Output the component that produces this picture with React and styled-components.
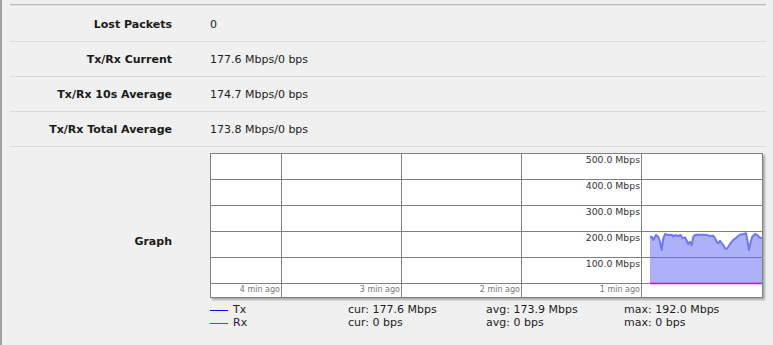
import React from "react";
import styled, { createGlobalStyle } from "styled-components";

const stats = [
  { label: "Lost Packets", value: "0" },
  { label: "Tx/Rx Current", value: "177.6 Mbps/0 bps" },
  { label: "Tx/Rx 10s Average", value: "174.7 Mbps/0 bps" },
  { label: "Tx/Rx Total Average", value: "173.8 Mbps/0 bps" },
];

const scale = ["500.0 Mbps", "400.0 Mbps", "300.0 Mbps", "200.0 Mbps", "100.0 Mbps"];
const cols = [70, 190, 310, 430];
const ago = ["4 min ago", "3 min ago", "2 min ago", "1 min ago"];

// tx samples, already in chart coords
const tx = [
  [439, 83.3], [440.7, 82.7], [442.3, 86], [445, 81], [447.3, 82.7], [449, 87.7],
  [450.7, 96], [452.3, 84.3], [454, 80], [457.3, 81], [460.7, 80.7], [462.3, 82.7],
  [464, 81], [467.3, 82], [469.7, 81], [471.7, 84.3], [474, 83.3], [475.7, 86.7],
  [477.3, 90], [479, 87.7], [480.7, 91], [482.3, 82.7], [484, 81], [487.3, 80.7],
  [492.3, 80.7], [495.7, 81], [499, 82], [502.3, 81.7], [504, 84.3], [505.7, 87.7],
  [507.3, 89.3], [509, 86.7], [510.7, 89.3], [512.3, 91], [514, 94.3], [515.7, 95],
  [517.3, 92.7], [519, 90], [522.3, 86], [525.7, 83.3], [529, 80.7], [532.3, 80],
  [535, 79.3], [536.3, 86], [538, 96], [539.7, 87.7], [541.3, 82.7], [544, 80],
  [546.3, 81], [548.3, 83.3], [551, 84.3],
];

const legend = [
  { name: "Tx", color: "#0000ff", cur: "177.6 Mbps", avg: "173.9 Mbps", max: "192.0 Mbps" },
  { name: "Rx", color: "#e000e0", cur: "0 bps", avg: "0 bps", max: "0 bps" },
];

const Graph = () => {
  const line = tx.map(([x, y]) => `${x},${y}`).join(" ");
  const area = `439,129 ${line} 551,129`;
  return (
    <ChartBox>
      <svg width="551" height="143" viewBox="0 0 551 143">
        <g stroke="#808080" strokeWidth="1" shapeRendering="crispEdges">
          {[25, 51, 77, 103, 129].map((y) => (
            <line key={y} x1="0" x2="551" y1={y + 0.5} y2={y + 0.5} />
          ))}
          {cols.map((x) => (
            <line key={x} x1={x + 0.5} x2={x + 0.5} y1="0" y2="143" />
          ))}
        </g>
        <g fontFamily="'DejaVu Sans', Verdana, sans-serif" fontSize="9.3" fill="#333" textAnchor="end">
          {scale.map((s, i) => (
            <text key={s} x="429" y={9 + i * 26}>{s}</text>
          ))}
        </g>
        <g fontFamily="'DejaVu Sans', Verdana, sans-serif" fontSize="8" fill="#777" textAnchor="end">
          {ago.map((s, i) => (
            <text key={s} x={cols[i] - 1} y="138">{s}</text>
          ))}
        </g>
        <polygon points={area} fill="rgba(90,100,245,0.5)" />
        <polyline points={line} fill="none" stroke="#6f78ee" strokeWidth="2" strokeLinejoin="round" />
        <line x1="439" x2="551" y1="129.5" y2="129.5" stroke="#e000e0" strokeWidth="1.5" />
      </svg>
    </ChartBox>
  );
};

const App = () => {
  return (
    <Page>
      <GlobalStyle />
      <Table>
        {stats.map((s) => (
          <Row key={s.label}>
            <Label>{s.label}</Label>
            <Value>{s.value}</Value>
          </Row>
        ))}
        <GraphRow>
          <Label>Graph</Label>
          <Value>
            <Graph />
            <Legend>
              {legend.map((l) => (
                <React.Fragment key={l.name}>
                  <span>
                    <Swatch $color={l.color} />
                    {l.name}
                  </span>
                  <span>cur: {l.cur}</span>
                  <span>avg: {l.avg}</span>
                  <span>max: {l.max}</span>
                </React.Fragment>
              ))}
            </Legend>
          </Value>
        </GraphRow>
      </Table>
    </Page>
  );
};

export default App;

const GlobalStyle = createGlobalStyle`
  html, body {
    margin: 0;
    padding: 0;
    background: #f0f0f0;
  }
  body {
    font-family: "DejaVu Sans", Verdana, sans-serif;
    font-size: 11px;
    color: #222;
  }
`;

const Page = styled.div`
  box-sizing: border-box;
  min-height: 100vh;
  border-left: 2px solid #a2a2a2;
  padding: 4px 7px 0 8px;
`;

const Table = styled.div`
  border-top: 1px solid #b8b8b8;
`;

const Row = styled.div`
  display: grid;
  grid-template-columns: 162px 1fr;
  align-items: center;
  min-height: 34px;
  border-bottom: 1px solid #d9d9d9;

  &:first-child {
    border-top: 1px solid #e2e2e2;
    padding-top: 1px;
  }
`;

const GraphRow = styled(Row)`
  border-bottom: none;
  padding: 6px 0 0;
`;

const Label = styled.div`
  text-align: right;
  font-weight: bold;
  color: #1a1a1a;
`;

const Value = styled.div`
  padding-left: 38px;
`;

const ChartBox = styled.div`
  width: 551px;
  height: 143px;
  border: 1px solid #808080;
  background: #fff;
  box-shadow: 2px 2px 2px rgba(0, 0, 0, 0.3);

  svg {
    display: block;
  }
`;

const Legend = styled.div`
  display: grid;
  grid-template-columns: 138px 138px 138px auto;
  margin-top: 5px;
  line-height: 13px;
  color: #222;
`;

const Swatch = styled.span`
  display: inline-block;
  width: 18px;
  height: 1px;
  margin-right: 5px;
  vertical-align: middle;
  background: ${(p) => p.$color};
`;
